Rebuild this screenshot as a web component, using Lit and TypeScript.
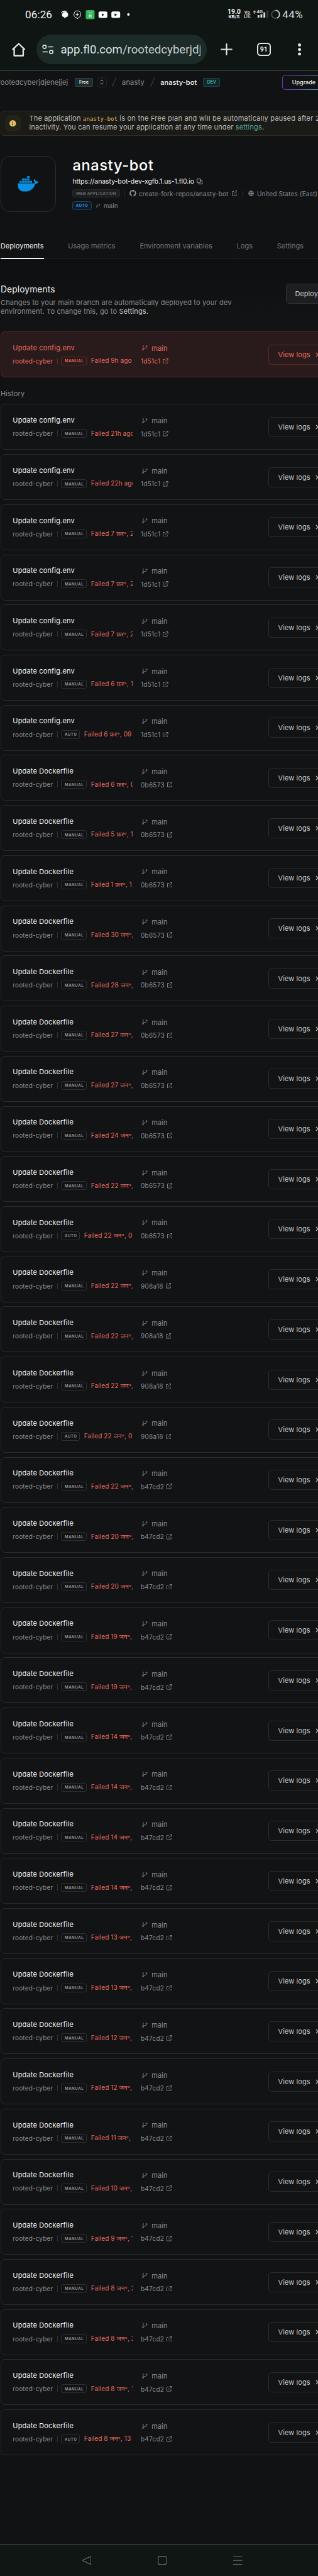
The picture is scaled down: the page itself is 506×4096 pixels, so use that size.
import { LitElement, html, svg, css } from "lit";
import { customElement, property } from "lit/decorators.js";
import { classMap } from "lit/directives/class-map.js";

type Kind = "MANUAL" | "AUTO";
interface Deployment { title: string; kind: Kind; status: string; hash: string; }

const d = (title: string, hash: string, status: string, kind: Kind = "MANUAL"): Deployment =>
  ({ title, hash, status: `Failed ${status}`, kind });
const ENV = "Update config.env";
const DOCKER = "Update Dockerfile";

const history: Deployment[] = [
  d(ENV, "1d51c1", "21h ago"),
  d(ENV, "1d51c1", "22h ago"),
  d(ENV, "1d51c1", "7 फ़र॰, 2"),
  d(ENV, "1d51c1", "7 फ़र॰, 2"),
  d(ENV, "1d51c1", "7 फ़र॰, 2"),
  d(ENV, "1d51c1", "6 फ़र॰, 1"),
  d(ENV, "1d51c1", "6 फ़र॰, 09", "AUTO"),
  d(DOCKER, "0b6573", "6 फ़र॰, 0"),
  d(DOCKER, "0b6573", "5 फ़र॰, 1"),
  d(DOCKER, "0b6573", "1 फ़र॰, 1"),
  ...["30", "28", "27", "27", "24", "22"].map((n) => d(DOCKER, "0b6573", `${n} जन॰,`)),
  d(DOCKER, "0b6573", "22 जन॰, 0", "AUTO"),
  ...["22", "22", "22"].map((n) => d(DOCKER, "908a18", `${n} जन॰,`)),
  d(DOCKER, "908a18", "22 जन॰, 0", "AUTO"),
  ...["22", "20", "20", "19", "19", "14", "14", "14", "14", "13", "13", "12", "12", "11", "10"].map((n) =>
    d(DOCKER, "b47cd2", `${n} जन॰,`)),
  d(DOCKER, "b47cd2", "9 जन॰, 1"),
  d(DOCKER, "b47cd2", "8 जन॰, 2"),
  d(DOCKER, "b47cd2", "8 जन॰, 2"),
  d(DOCKER, "b47cd2", "8 जन॰, 1"),
  d(DOCKER, "b47cd2", "8 जन॰, 13", "AUTO"),
];

const branchIcon = html`<svg class="branch" viewBox="0 0 35 33" fill="none" stroke="currentColor" stroke-width="3.6">
  <path d="M8.5 0.5 6.5 22M6.5 20H16Q26 19.500 28 11" /><circle cx="6" cy="27" r="3.900" /><circle cx="29" cy="6.200" r="3.900" /></svg>`;
const linkIcon = html`<svg class="link" viewBox="0 0 35 35" fill="none" stroke="currentColor" stroke-width="3.600">
  <path d="M14 6H2V33H29V21M20 2H33V15M33 2 12 23" /></svg>`;

@customElement("deployment-card")
class DeploymentCard extends LitElement {
  @property({ attribute: false }) item!: Deployment;
  @property({ type: Boolean }) current = false;

  static styles = css`
    :host { display: block; height: 73px; margin-left: 0.8px; }
    .card { box-sizing: border-box; height: 100%; width: 560px; display: flex; align-items: center;
      border: 1px solid #2a2b2d; border-radius: 7px; background: #111315; padding-left: 18.5px; color: #8b8c8e; }
    .left { width: 190.700px; overflow: hidden; display: flex; flex-direction: column; flex: none; }
    .title { height: 20.800px; line-height: 20.800px; font-size: 11px; letter-spacing: .16px; color: #f2f2f2; }
    .meta { height: 20.800px; display: flex; align-items: center; white-space: nowrap; font-size: 10px; letter-spacing: .15px; }
    .sep { width: 1px; height: 10px; background: #2f3032; margin: 0 5.700px 0 6.600px; flex: none; }
    .author { width: 63.900px; flex: none; }
    .kind { box-sizing: border-box; flex: none; height: 14px; border: 1px solid #2d2e30; border-radius: 3px;
      display: flex; align-items: center; padding-left: 4.500px; width: 41px; font-size: 6.100px; font-weight: 600; letter-spacing: .55px; color: #97989a; }
    .kind.auto { width: 30px; }
    .status { margin-left: 6.400px; margin-top: -1.200px; color: #ec6a5e; letter-spacing: .08px; line-height: 14px; }
    .commit { width: 216.300px; padding-left: 13px; box-sizing: border-box; display: flex; flex-direction: column; flex: none; }
    .ref { height: 20.600px; margin-top: .6px; display: flex; align-items: center; gap: 6.700px; font-size: 11px; letter-spacing: .07px; padding-left: 1.900px; }
    .hash { height: 20.600px; display: flex; align-items: center; gap: 4px; font-size: 10px; letter-spacing: .25px; }
    svg { flex: none; }
    .branch { width: 8.700px; height: 8.200px; }
    .link { width: 8.600px; height: 8.600px; }
    .logs { box-sizing: border-box; width: 100px; height: 32px; border: 1px solid #2a2b2d; border-radius: 5px; display: flex; align-items: center;
      padding-left: 14.200px; gap: 8.600px; font-size: 11px; letter-spacing: .09px; color: #c6c6c7; white-space: nowrap; flex: none; }
    .chev { width: 5px; height: 8px; }
    .current { background: #291b1b; border-color: #5a2924; color: #ec6a5e; }
    .current .title, .current .logs, .current .kind { color: #ec6a5e; }
    .current .sep { background: #5a2924; }
    .current .kind, .current .logs { border-color: #5a2924; }
  `;

  render() {
    const it = this.item;
    return html`<div class=${classMap({ card: true, current: this.current })}>
      <div class="left">
        <div class="title">${it.title}</div>
        <div class="meta">
          <span class="author">rooted-cyber</span><span class="sep"></span>
          <span class=${classMap({ kind: true, auto: it.kind === "AUTO" })}>${it.kind}</span>
          <span class="status">${it.status}</span>
        </div>
      </div>
      <div class="commit">
        <div class="ref">${branchIcon}<span>main</span></div>
        <div class="hash"><span>${it.hash}</span>${linkIcon}</div>
      </div>
      <div class="logs"><span>View logs</span>
        <svg class="chev" viewBox="0 0 5 8" fill="none" stroke="currentColor" stroke-width="1.200"><path d="M1 1 4 4 1 7" /></svg>
      </div>
    </div>`;
  }
}

@customElement("status-bar")
class StatusBar extends LitElement {
  static styles = css`
    :host { display: flex; align-items: center; height: 45.600px; color: #f4f6f5; font-family: Roboto, sans-serif; }
    svg { flex: none; }
    .time { font-size: 17.100px; margin-left: 40px; width: 57.200px; letter-spacing: .1px; }
    .icons { width: 265.500px; height: 30px; flex: none; }
    .speed, .volte { display: flex; flex-direction: column; align-items: center; font-weight: 700; flex: none; }
    .speed { width: 19.500px; font-size: 10.300px; line-height: 7.700px; }
    .speed small { font-size: 7.800px; line-height: 7px; }
    .volte { margin-left: 6.500px; width: 9px; font-size: 7.500px; line-height: 6.200px; color: #d2d6d4; }
    .volte small { font-size: 7px; line-height: 6.200px; letter-spacing: -.3px; }
    .signal { margin-left: 5.700px; width: 46px; height: 30px; }
    .net { font: 700 8px Roboto, sans-serif; }
    .pct { font-size: 17.100px; color: #d5d9d7; letter-spacing: .4px; margin-left: -.2px; }
  `;
  render() {
    const yt = (x: number) => svg`<rect x=${x} y="10.300" width="14" height="10.200" rx="2.500" fill="#fff"/><path d=${`M${x + 5.2} 13.2v4.600l4-2.300z`} fill="#0f1513"/>`;
    return html`
      <span class="time">06:26</span>
      <svg class="icons" viewBox="0 0 265.5 30">
        <path d="M1 11.500C3 9 9.500 8.500 10.500 12.500C13 15 11 20 7 19.800L5.800 21.500 4.800 19.300C1.200 19 .8 15 2.200 13.200C4 11 7 11 9 11.500" fill="#fff" stroke="#0f1513" stroke-width=".3"/>
        <path d="M.4 13C1 9.800 5 8.600 8.500 10" fill="none" stroke="#fff" stroke-width=".9"/>
        <path d="M26 9.200a5.600 5.600 0 0 1 2 10.800L26 22l-1.200-1.800A5.600 5.600 0 0 1 26 9.200z" fill="none" stroke="#f4f6f5" stroke-width="1"/>
        <path d="M26 12.400v5M23.500 14.900h5" stroke="#fff" stroke-width="1.200"/>
        <rect x="39.400" y="8" width="14.100" height="14.400" rx="2.500" fill="#34b25c"/>
        <path d="M44.200 10.500c0 3.200 4.700 3.200 4.700 0" fill="none" stroke="#d9f5e2" stroke-width=".9"/>
        <path d="M44.400 15.200h1.700v1.900h-1.700zM47 15.200h1.700v1.900H47zM44.400 17.800h1.700v1.700h-1.700zM47 17.800h1.700v1.700H47z" fill="#eafbf0"/>
        ${yt(59.8)}${yt(80.2)}
        <circle cx="107.300" cy="15" r="2" fill="#fff"/>
      </svg>
      <span class="speed"><span>19.0</span><small>KB/S</small></span>
      <span class="volte"><span>Vo</span><small>LTE</small></span>
      <svg class="signal" viewBox="0 0 46 30">
        <path d="M2 8.300 4.200 10.700H-.2zM2 14 4.200 11.700H-.2z" fill="#d5d9d7"/>
        <text class="net" x="5.200" y="13.300" fill="#d5d9d7">4G</text>
        <path d="M6.900 16h2.900v4H6.900zM11.500 14.500h2.900V20h-2.900zM16.200 11.700h2.900V20h-2.900z" fill="#d5d9d7"/>
        <path d="M21.300 8.500h2.300V20h-2.300z" fill="#33403c"/>
        <circle cx="35.400" cy="14.900" r="6.200" fill="none" stroke="#4b514f" stroke-width="1.700"/>
        <path d="M35.400 8.700a6.200 6.200 0 0 1 2.500 11.900" fill="none" stroke="#c9cdcb" stroke-width="1.700"/>
      </svg>
      <span class="pct">44%</span>`;
  }
}

@customElement("browser-bar")
class BrowserBar extends LitElement {
  static styles = css`
    :host { display: flex; align-items: center; height: 66.100px; border-bottom: 1.500px solid #3f4947; box-sizing: content-box; font-family: Roboto, sans-serif; color: #dfe4e1; }
    svg { flex: none; }
    .home { width: 21.500px; height: 21.800px; margin-left: 18.500px; }
    .pill { margin-left: 17.600px; width: 271.300px; height: 47.100px; border-radius: 23.500px; background: #1c2a28; display: flex; align-items: center; box-sizing: border-box; padding-left: 9.400px; flex: none; }
    .site { width: 18.300px; height: 15px; margin-right: 11.200px; }
    .url { width: 222.800px; overflow: hidden; white-space: nowrap; font-size: 18.600px; line-height: 28px; color: #c2ccc8; margin-top: .5px; }
    .host { color: #dde3e0; }
    .plus { width: 19px; height: 19px; margin-left: 21.800px; }
    .tabs { box-sizing: border-box; margin-left: 39.300px; width: 21.600px; height: 21.600px; border: 2px solid #dfe4e1; border-radius: 5.500px; display: flex; align-items: center; justify-content: center; font-size: 10.500px; font-weight: 700; flex: none; }
    .dots { width: 5.200px; height: 19.500px; margin-left: 43.600px; }
  `;
  render() {
    return html`
      <svg class="home" viewBox="0 0 21.5 21.8" fill="none" stroke="#dfe4e1" stroke-width="2.400" stroke-linejoin="round"><path d="M.8 11 10.750 1.500 20.700 11M3.600 9.500V20.500H17.900V9.500"/></svg>
      <div class="pill">
        <svg class="site" viewBox="0 0 18.3 15" fill="none" stroke="#dfe4e1" stroke-width="1.700"><circle cx="3.900" cy="3.500" r="2.700"/><path d="M9.300 3.500H17.700M.6 11.500H9"/><circle cx="14.500" cy="11.500" r="2.700"/></svg>
        <div class="url"><span class="host">app.fl0.com</span>/rootedcyberjdj</div>
      </div>
      <svg class="plus" viewBox="0 0 19 19" stroke="#dfe4e1" stroke-width="2.200" stroke-linecap="round"><path d="M9.500 1.200V17.800M1.200 9.500H17.800"/></svg>
      <div class="tabs">91</div>
      <svg class="dots" viewBox="0 0 5.200 19.500" fill="#dfe4e1"><circle cx="2.600" cy="2.600" r="2.500"/><circle cx="2.600" cy="9.750" r="2.500"/><circle cx="2.600" cy="16.900" r="2.500"/></svg>`;
  }
}

@customElement("app-root")
class AppRoot extends LitElement {
  static styles = css`
    :host { display: block; width: 506px; height: 4096px; overflow: hidden; background: #111214; font-family: Inter, "Noto Sans", sans-serif; color: #8b8c8e; white-space: nowrap; }
    svg { flex: none; }
    .chrome { background: #0f1513; height: 113.200px; }
    .crumbs { height: 35.600px; display: flex; align-items: center; font-size: 11px; overflow: hidden; }
    .org { margin-left: -3.300px; width: 122px; letter-spacing: .1px; flex: none; }
    .badge { box-sizing: border-box; display: flex; align-items: center; justify-content: center; border: 1px solid #324044; border-radius: 2px; flex: none; }
    .free { width: 29.500px; height: 14.600px; background: #1f2b2f; color: #f0f2f2; font-size: 7px; font-weight: 600; }
    .updown { width: 16.300px; height: 16.300px; margin-left: 5.300px; border-color: #26272a; border-radius: 4.500px; }
    .updown svg { width: 6px; height: 9px; }
    .slash { width: 7.500px; height: 15.400px; margin-left: 8.300px; }
    .project { margin-left: 8.400px; width: 36.500px; letter-spacing: .23px; flex: none; }
    .app { margin-left: 8.900px; width: 59.400px; letter-spacing: .1px; font-weight: 500; color: #f5f5f5; flex: none; }
    .dev { margin-left: 8.800px; width: 26.500px; height: 13.500px; background: #14262a; border-color: #1c4446; color: #3fc1bb; font-size: 7px; font-weight: 500; }
    .upgrade { margin-left: 99.300px; height: 24.800px; width: 90px; border-radius: 5.500px; padding: 1px; box-sizing: border-box; background: linear-gradient(90deg, #6b35b0, #4f9fc4 57px, #3fc1bb); flex: none; }
    .upgrade div { background: #111214; height: 100%; border-radius: 4.500px; display: flex; align-items: center; padding-left: 14.700px; font-size: 9px; font-weight: 500; color: #f2f2f2; }
    .alert { margin: 26.800px 0 0 .8px; box-sizing: border-box; width: 560px; height: 40.500px; border: 1px solid #302d20; border-radius: 5px; background: #1a1a17; display: flex; align-items: center; padding-left: 6px; font-size: 11px; color: #bcbcba; }
    .bell { width: 25px; height: 25.600px; border-radius: 7px; background: #242319; display: flex; align-items: center; justify-content: center; margin-right: 13.700px; flex: none; }
    .bell svg { width: 10.600px; height: 10.600px; }
    .copy { letter-spacing: .15px; line-height: 13.600px; padding-top: .3px; }
    .copy code { font-family: "DejaVu Sans Mono", monospace; font-size: 9.150px; line-height: 0; letter-spacing: 0; color: #dcb765; }
    .wide { letter-spacing: .23px; }
    .teal { color: #55a39d; }
    .hero { margin: 32.100px 0 0 .8px; height: 88.700px; display: flex; }
    .logo { box-sizing: border-box; width: 88.700px; height: 88.700px; border: 1px solid #2b2c2e; border-radius: 15px; display: flex; align-items: center; justify-content: center; margin-right: 26px; flex: none; }
    .logo svg { width: 33.300px; height: 24.600px; }
    .info { display: flex; flex-direction: column; }
    h1 { margin: 0; font-size: 23.500px; font-weight: 500; letter-spacing: .7px; color: #fff; height: 30px; line-height: 29.500px; }
    .row { display: flex; align-items: center; font-size: 10px; letter-spacing: .13px; }
    .site { height: 21.300px; font-size: 10.500px; letter-spacing: -.07px; color: #f3f3f3; }
    .site svg { width: 9.200px; height: 9.200px; margin-left: 4.200px; }
    .facts { height: 17px; margin-top: .4px; }
    .type { box-sizing: border-box; width: 75.700px; height: 12.200px; border: 1px solid #29292c; border-radius: 3px; background: #1d1e20; display: flex; align-items: center; padding-left: 4.400px; font-size: 6.500px; letter-spacing: .35px; flex: none; }
    .bar { width: 1px; height: 10px; background: #37383a; margin: 0 7.500px 0 6.200px; flex: none; }
    .gh { width: 10.700px; height: 10.700px; margin-right: 4.400px; }
    .repo { width: 147.800px; flex: none; }
    .facts .link { width: 8.700px; height: 8.400px; margin-right: 2.600px; }
    .globe { width: 9px; height: 9px; margin-right: 5.200px; }
    .source { height: 20px; margin-top: 1.200px; letter-spacing: 0; }
    .auto { box-sizing: border-box; width: 30.200px; height: 14.800px; border: 1px solid #1c4467; border-radius: 3.500px; background: #0f1a25; color: #2e96ec; font-size: 6.100px; font-weight: 700; letter-spacing: .5px; display: flex; align-items: center; padding-left: 4.300px; margin-right: 7.700px; flex: none; }
    .source .branch { width: 6.500px; height: 6.300px; margin-right: 5px; }
    .tabs { height: 49px; margin-top: 26.200px; box-sizing: border-box; border-bottom: 1px solid #242527; display: flex; align-items: flex-end; font-size: 11px; color: #737476; padding-left: .8px; gap: 38.800px; }
    .tab { height: 43px; line-height: 46px; box-sizing: border-box; letter-spacing: .01px; }
    .tab.on { color: #f0f0f0; border-bottom: 2.500px solid #f5f5f5; margin-bottom: -1px; height: 44px; letter-spacing: .05px; }
    .body { background: linear-gradient(#0e0f11, #111315 90px); height: 115px; padding-left: 1px; display: flex; }
    .intro { width: 453.500px; padding-top: 38px; flex: none; font-size: 11px; letter-spacing: .15px; line-height: 14.100px; }
    h2 { margin: 0 0 4px; font-size: 13.800px; font-weight: 400; letter-spacing: .1px; line-height: 20px; color: #f0f0f0; }
    .bright { color: #c9c9ca; }
    .deploy { box-sizing: border-box; margin-top: 38.700px; height: 32px; width: 90px; border: 1px solid #303133; border-radius: 5px; background: #1d1e20; font-size: 11px; color: #c6c6c7; display: flex; align-items: center; padding-left: 14px; flex: none; }
    .history { font-size: 11px; letter-spacing: .15px; height: 42.400px; line-height: 53.200px; padding-left: 1px; }
    .list { display: flex; flex-direction: column; gap: 6.730px; }
    .nav { margin-top: 140.700px; height: 52px; border-top: 1px solid #3f4947; background: #0f1613; display: flex; align-items: center; padding-left: 130.600px; gap: 106px; box-sizing: border-box; }
    .nav svg { width: 14.400px; height: 14.400px; }
  `;

  render() {
    const current = d(ENV, "1d51c1", "9h ago");
    const slash = html`<svg class="slash" viewBox="0 0 7.5 15.4"><path d="M7 .3.500 15.100" stroke="#3d3e40" stroke-width="1.100"/></svg>`;
    const tabs = ["Deployments", "Usage metrics", "Environment variables", "Logs", "Settings"];
    return html`
      <div class="chrome"><status-bar></status-bar><browser-bar></browser-bar></div>
      <div class="crumbs">
        <span class="org">rootedcyberjdjenejjej</span>
        <span class="badge free">Free</span>
        <span class="badge updown"><svg viewBox="0 0 6 9" fill="none" stroke="#b5b6b8" stroke-width="1"><path d="M.7 3.200 3 .9 5.300 3.200M.7 5.800 3 8.100 5.300 5.800"/></svg></span>
        ${slash}<span class="project">anasty</span>${slash}<span class="app">anasty-bot</span>
        <span class="badge dev">DEV</span>
        <div class="upgrade"><div>Upgrade</div></div>
      </div>
      <div class="alert">
        <div class="bell"><svg viewBox="0 0 10.6 10.6"><circle cx="5.300" cy="5.300" r="5.200" fill="#e3bd62"/><path d="M5.300 2.300V3.500M5.300 4.500V8.300" stroke="#2a2819" stroke-width="1.100"/></svg></div>
        <div class="copy">The application <code>anasty-bot</code><span class="wide"> is on the Free plan and will be automatically paused after 2</span><br>inactivity. You can resume your application at any time under <span class="teal">settings</span>.</div>
      </div>
      <div class="hero">
        <div class="logo"><svg viewBox="122 147 142 105" fill="#0b8fe0">
          <path d="M123 196H232C238 195 240 192 236 187C230 180 230 173 235 167C241 171 245 177 246 183C252 181 259 183 264 187C261 196 252 199 242 199C234 232 208 252 172 252C136 252 121 232 123 196Z"/>
          <path d="M135 180h15v13h-15zM152.500 180h15v13h-15zM170 180h15v13h-15zM187.500 180h15v13h-15zM205 180h15v13h-15zM152.500 163.500h15v13.500h-15zM170 163.500h15v13.500h-15zM187.500 163.500h15v13.500h-15zM187.500 147h15v13.500h-15z"/></svg></div>
        <div class="info">
          <h1>anasty-bot</h1>
          <div class="row site"><span>https://anasty-bot-dev-xgfb.1.us-1.fl0.io</span>
            <svg viewBox="0 0 39 38" fill="none" stroke="currentColor" stroke-width="3.600"><path d="M2 2H24V25H2zM29 13H37V36H15V29"/></svg></div>
          <div class="row facts"><span class="type">WEB APPLICATION</span><span class="bar"></span>
            <svg class="gh" viewBox="0 0 16 16" fill="currentColor"><path d="M8 0C3.580 0 0 3.580 0 8c0 3.540 2.290 6.530 5.470 7.590.4.070.55-.17.55-.38 0-.19-.01-.82-.01-1.490-2.010.37-2.530-.49-2.690-.94-.09-.23-.48-.94-.82-1.130-.28-.15-.68-.52-.01-.53.63-.01 1.080.58 1.230.82.72 1.210 1.870.87 2.330.66.070-.52.28-.87.51-1.070-1.780-.2-3.640-.89-3.640-3.950 0-.87.31-1.590.82-2.150-.08-.2-.36-1.020.080-2.120 0 0 .67-.21 2.200.82.64-.18 1.320-.27 2-.27.68 0 1.360.09 2 .27 1.530-1.040 2.200-.82 2.200-.82.44 1.100.16 1.920.080 2.120.51.56.82 1.270.82 2.150 0 3.070-1.870 3.750-3.650 3.950.29.25.54.73.54 1.480 0 1.070-.01 1.930-.01 2.200 0 .21.15.46.55.38A8.013 8.013 0 0016 8c0-4.420-3.580-8-8-8z"/></svg>
            <span class="repo">create-fork-repos/anasty-bot</span>${linkIcon}<span class="bar"></span>
            <svg class="globe" viewBox="0 0 18 18" fill="none" stroke="currentColor" stroke-width="1.700"><circle cx="9" cy="9" r="8"/><ellipse cx="9" cy="9" rx="3.600" ry="8"/><path d="M1 9H17M9 1V17"/></svg>
            <span>United States (East)</span></div>
          <div class="row source"><span class="auto">AUTO</span>${branchIcon}<span>main</span></div>
        </div>
      </div>
      <div class="tabs">${tabs.map((t, i) => html`<span class=${classMap({ tab: true, on: i === 0 })}>${t}</span>`)}</div>
      <div class="body">
        <div class="intro"><h2>Deployments</h2>Changes to your main branch are automatically deployed to your dev<br>environment. To change this, go to <span class="bright">Settings.</span></div>
        <div class="deploy">Deploy</div>
      </div>
      <deployment-card .item=${current} current></deployment-card>
      <div class="history">History</div>
      <div class="list">${history.map((it) => html`<deployment-card .item=${it}></deployment-card>`)}</div>
      <div class="nav">
        <svg viewBox="0 0 14.4 14.4" fill="none" stroke="#6d7673" stroke-width="1.100" stroke-linejoin="round"><path d="M13.200.9Q13.900.7 13.900 1.500V12.900Q13.900 13.700 13.200 13.500L1 7.800Q.4 7.200 1 6.600z"/></svg>
        <svg viewBox="0 0 14.4 14.4" fill="none" stroke="#6d7673" stroke-width="1.100"><rect x=".6" y=".6" width="13.200" height="13.200" rx="3"/></svg>
        <svg viewBox="0 0 14.4 14.4" stroke="#6d7673" stroke-width="1"><path d="M0 .7H14.400M0 7.200H14.400M0 13.700H14.400"/></svg>
      </div>`;
  }
}
